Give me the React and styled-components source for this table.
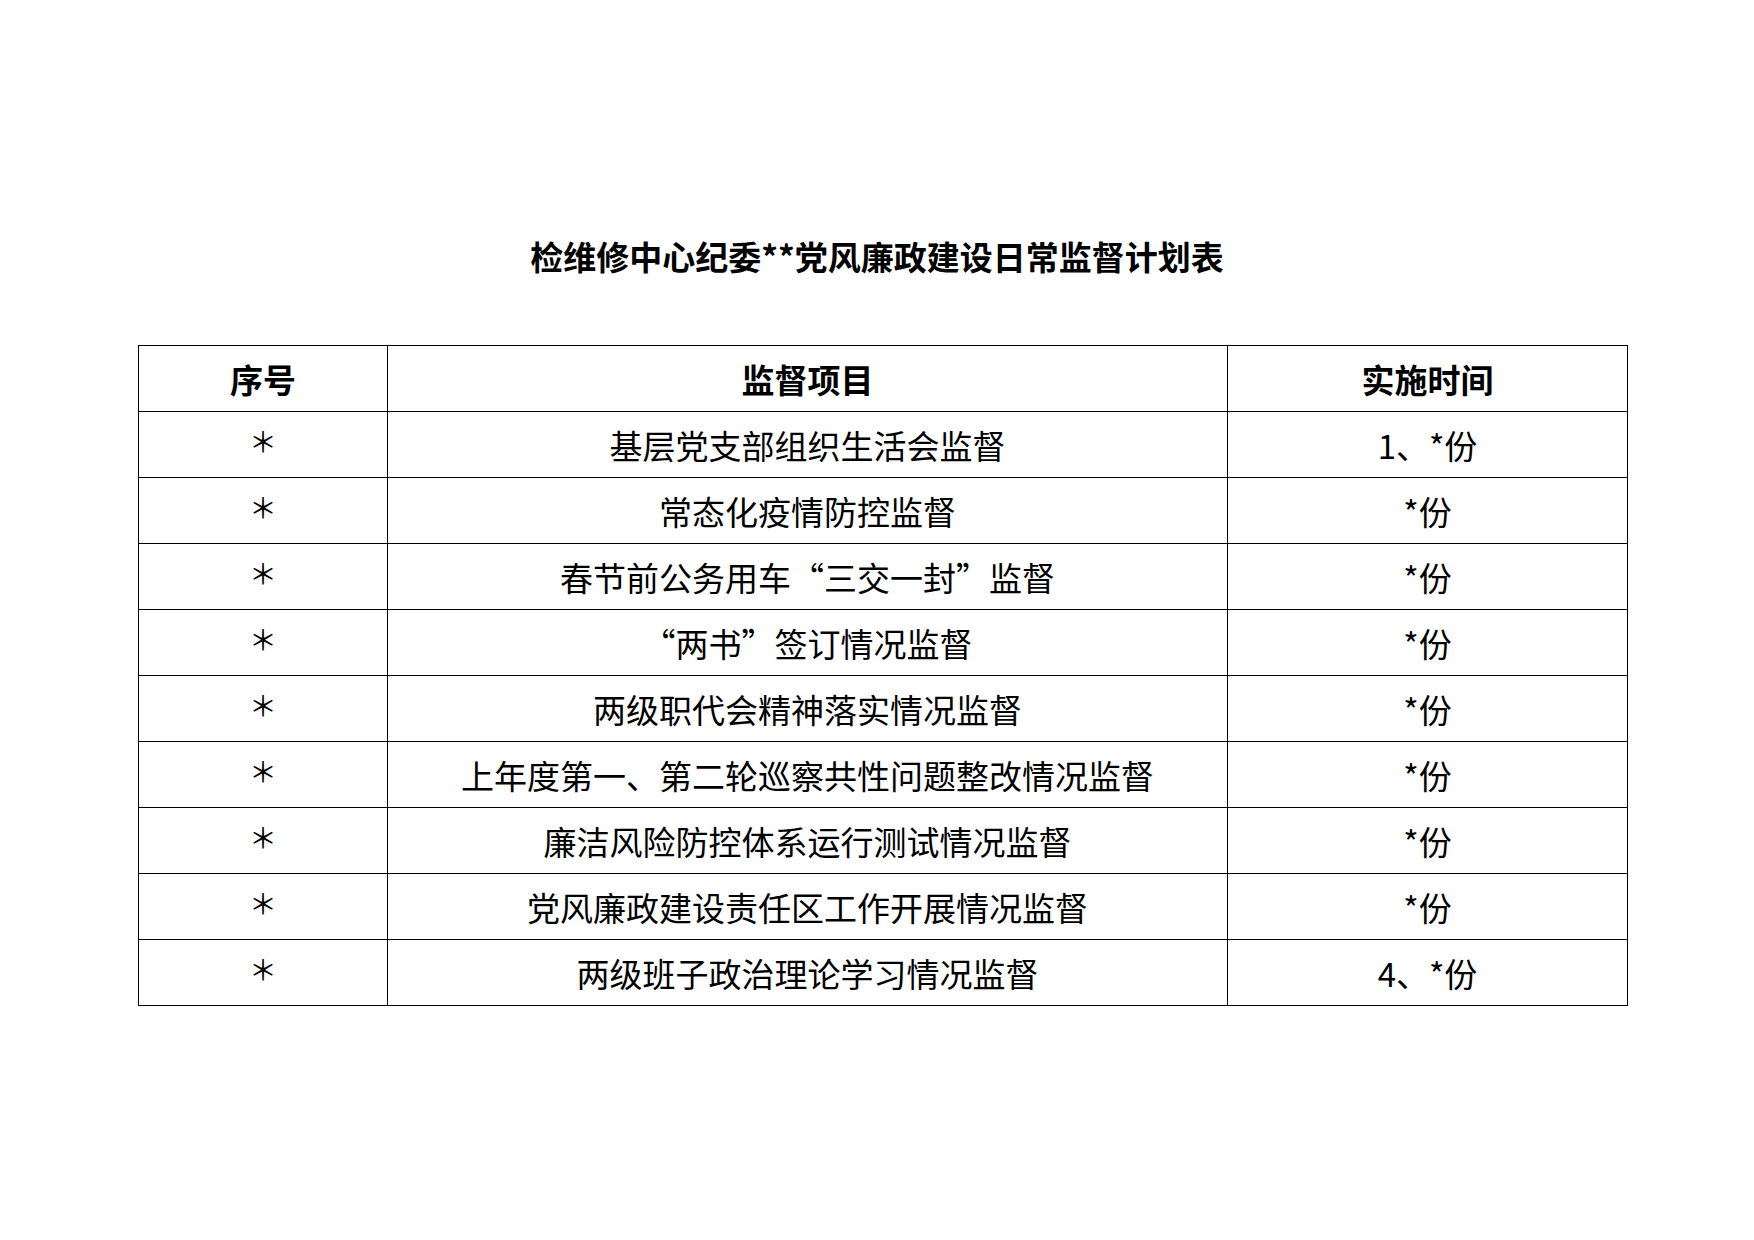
import styled, { createGlobalStyle } from "styled-components"

const Global = createGlobalStyle`
  html, body {
    margin: 0;
    padding: 0;
    background: #fff;
  }
  body {
    font-family: "Noto Sans CJK SC", "Noto Sans", sans-serif;
    color: #000;
  }
`

const Page = styled.div`
  width: 1754px;
  height: 1240px;
  box-sizing: border-box;
  padding-top: 233px;
  padding-left: 138px;
`

const Title = styled.h1`
  margin: 0 0 66px 0;
  width: 1478px;
  text-align: center;
  font-size: 33px;
  line-height: 46px;
  font-weight: 700;
`

const Table = styled.table`
  border-collapse: collapse;
  width: 1489px;
  table-layout: fixed;
`

const Cell = styled.td`
  border: 1.5px solid #000;
  height: 65px;
  padding: 0;
  text-align: center;
  vertical-align: middle;
  font-size: 33px;
  line-height: 40px;
  font-weight: ${(p) => (p.$head ? 700 : 400)};
`

const Star = styled.span`
  display: inline-block;
  font-size: 28px;
  transform: translateY(-5px);
`

const rows = [
  ["基层党支部组织生活会监督", "1、*份"],
  ["常态化疫情防控监督", "*份"],
  ["春节前公务用车“三交一封”监督", "*份"],
  ["“两书”签订情况监督", "*份"],
  ["两级职代会精神落实情况监督", "*份"],
  ["上年度第一、第二轮巡察共性问题整改情况监督", "*份"],
  ["廉洁风险防控体系运行测试情况监督", "*份"],
  ["党风廉政建设责任区工作开展情况监督", "*份"],
  ["两级班子政治理论学习情况监督", "4、*份"],
]

export default function App() {
  return (
    <Page>
      <Global />
      <Title>检维修中心纪委**党风廉政建设日常监督计划表</Title>
      <Table>
        <colgroup>
          <col style={{ width: 249 }} />
          <col style={{ width: 840 }} />
          <col style={{ width: 400 }} />
        </colgroup>
        <tbody>
          <tr>
            <Cell $head>序号</Cell>
            <Cell $head>监督项目</Cell>
            <Cell $head>实施时间</Cell>
          </tr>
          {rows.map(([item, time], i) => (
            <tr key={i}>
              <Cell><Star>＊</Star></Cell>
              <Cell>{item}</Cell>
              <Cell>{time}</Cell>
            </tr>
          ))}
        </tbody>
      </Table>
    </Page>
  )
}
